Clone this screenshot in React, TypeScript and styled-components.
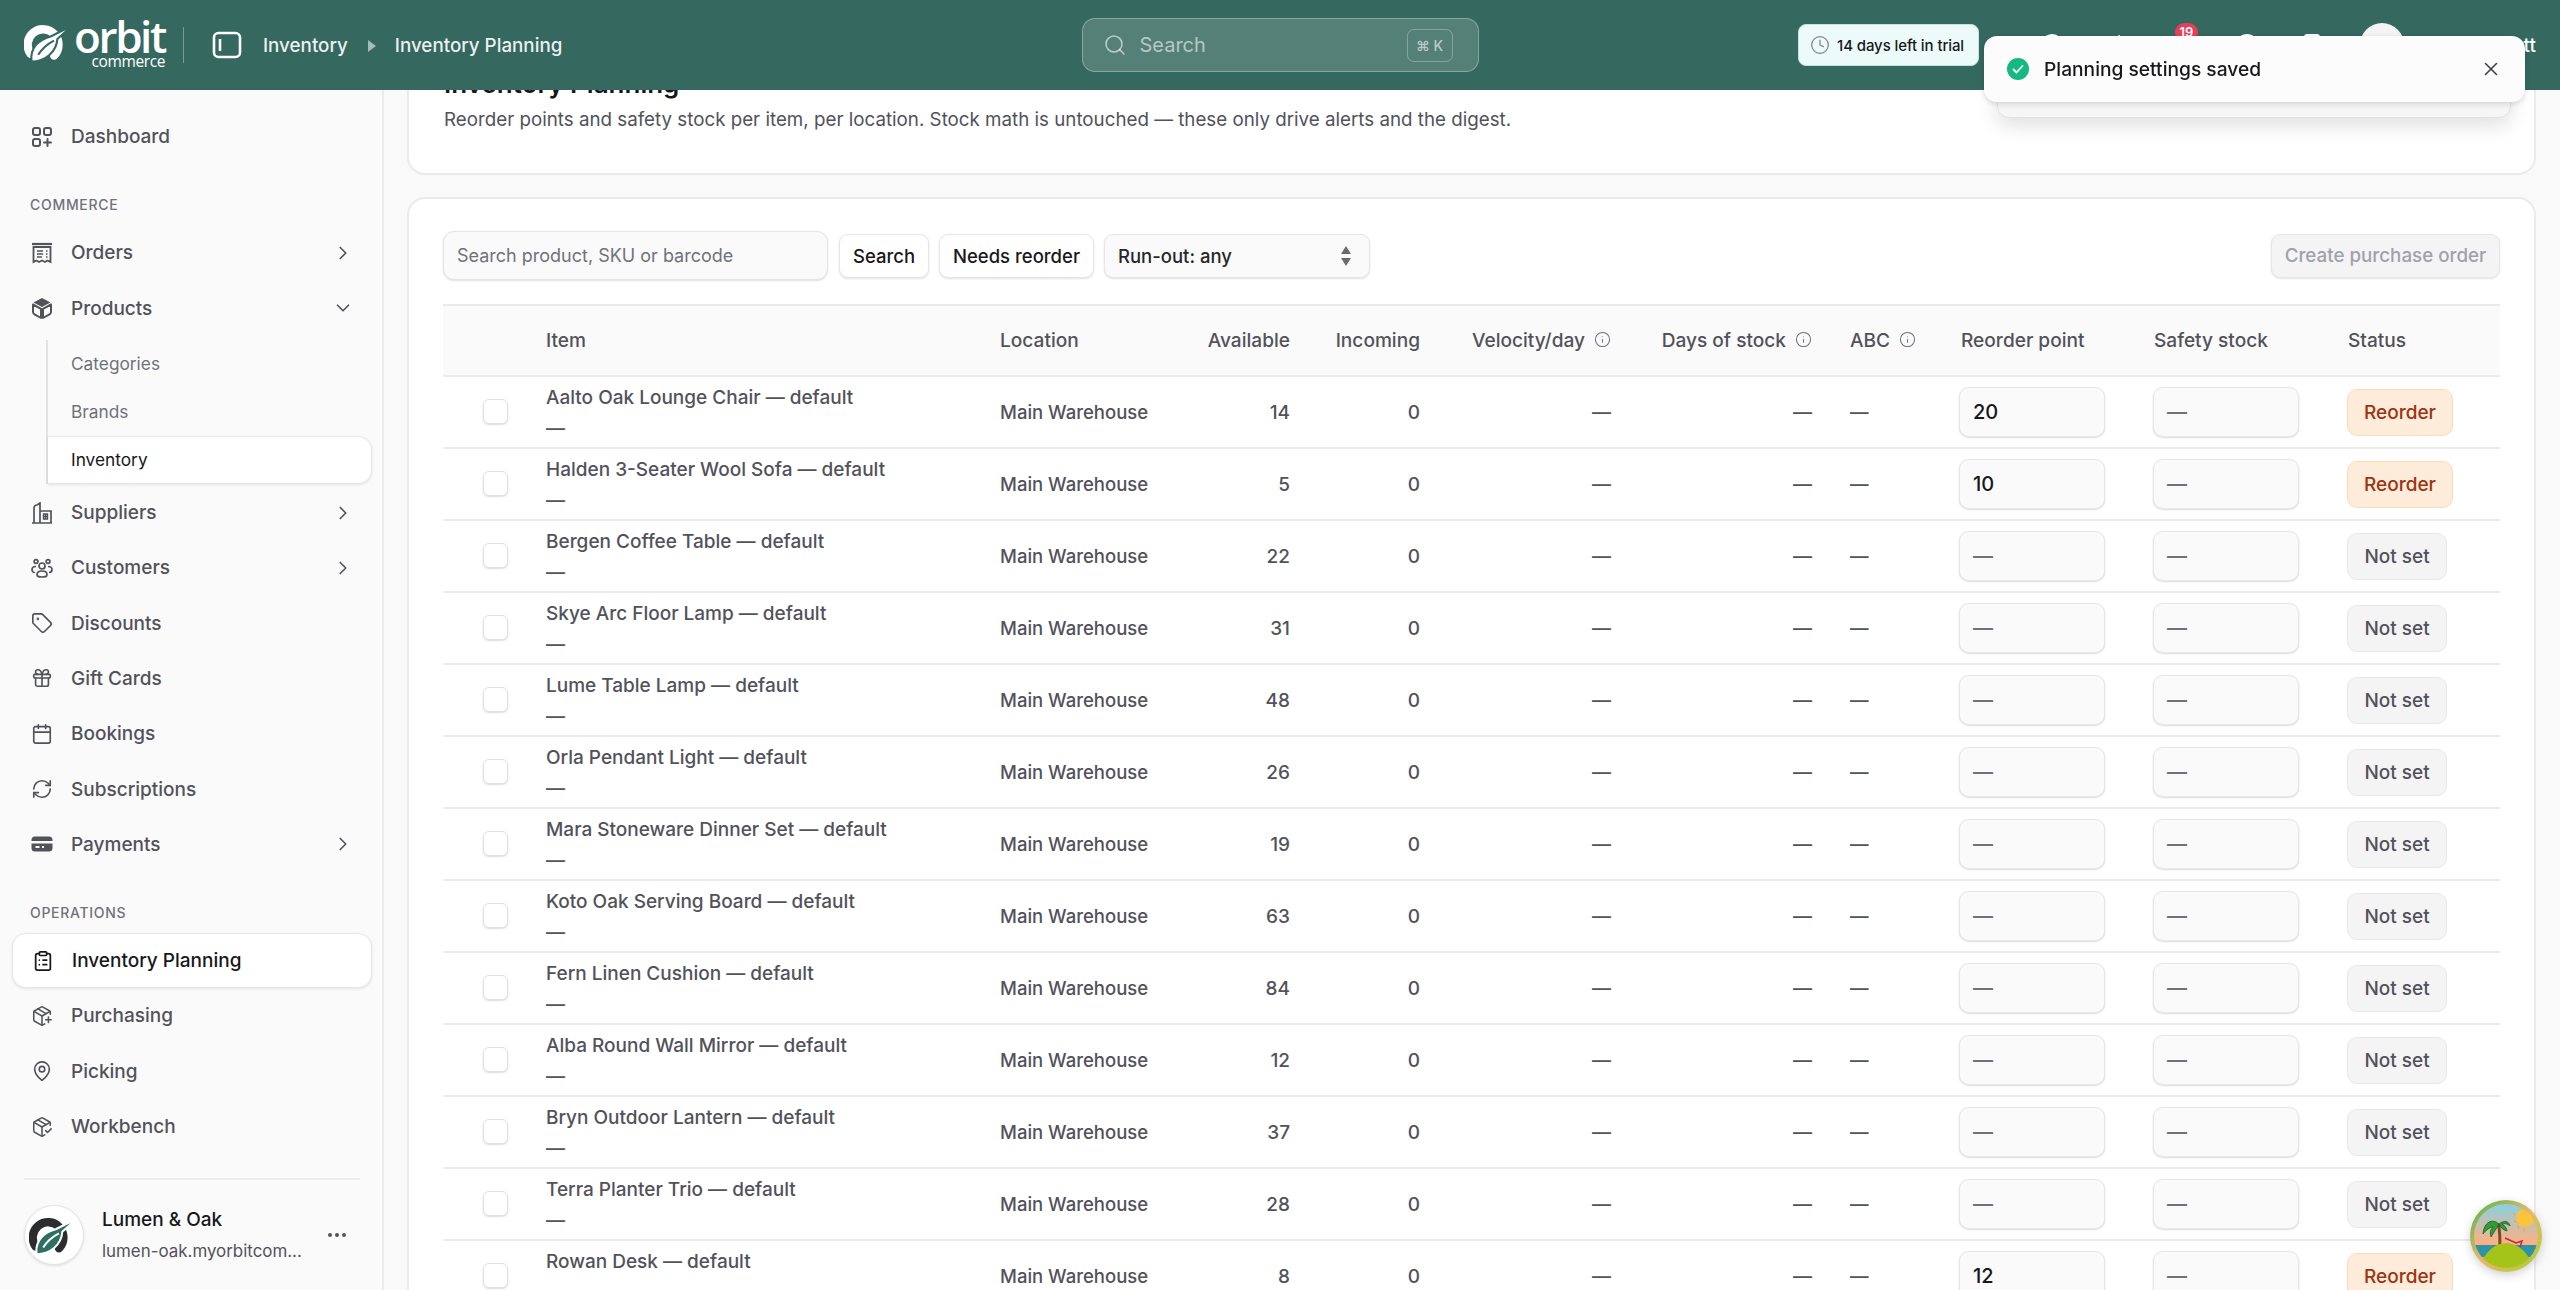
import React from 'react';
import styled, { createGlobalStyle } from 'styled-components';
import {
  Search as SearchIcon, Clock, X, Info, ChevronRight, ChevronDown, Tag, Gift, Calendar, RefreshCw, ClipboardList,
  PackagePlus, PackageCheck, MapPin, MessageCircle, SlidersHorizontal, Bell, CircleHelp, Store, MoreHorizontal,
} from 'lucide-react';

const Global = createGlobalStyle`
  html, body { margin: 0; padding: 0; height: 100%; overflow: hidden; background: #f9f9f9; }
  body { font-family: Inter, "Liberation Sans", sans-serif; color: #18181b; }
  * { box-sizing: border-box; }
`;

const Shell = styled.div`display: flex; flex-direction: column; height: 1290px; overflow: hidden;`;
const TopBar = styled.header`
  height: 90px; flex: none; background: #35685f; display: grid; grid-template-columns: 1fr 397px 1fr;
  align-items: center; padding: 0 24px; position: relative; z-index: 5;
`;
const TopLeft = styled.div`display: flex; align-items: center; color: rgba(255,255,255,.92); font-size: 18.8px; font-weight: 500;`;
const LogoWrap = styled.div`display: flex; align-items: flex-start; width: 141px; height: 46px; justify-content: space-between;`;
const LogoWords = styled.div`display: flex; flex-direction: column; align-items: flex-end; color: #fff; font-family: "Open Sans", sans-serif; line-height: 1;`;
const LogoName = styled.span`font-size: 44px; font-weight: 600; letter-spacing: -2.4px; height: 33px; line-height: 29px;`;
const LogoSub = styled.span`font-size: 15.5px; font-weight: 500; letter-spacing: -.4px; line-height: 13px;`;
const VBar = styled.div`width: 1px; height: 36px; background: rgba(255,255,255,.35); margin: 0 28px 0 18px;`;
const PanelGlyph = styled.svg`width: 30px; height: 28px; margin-right: 21px; flex: none;`;
const Crumb = styled.span`white-space: nowrap;`;
const CrumbArrow = styled.span`
  width: 0; height: 0; border-left: 8px solid rgba(255,255,255,.55); border-top: 6px solid transparent;
  border-bottom: 6px solid transparent; margin: 2px 19px 0 20px;
`;
const TopSearch = styled.div`
  height: 54px; border-radius: 13px; border: 1.5px solid rgba(255,255,255,.3); background: rgba(255,255,255,.16);
  display: flex; align-items: center; padding: 0 25px 0 20px; gap: 13px; color: rgba(255,255,255,.58); font-size: 20px;
`;
const Kbd = styled.span`
  margin-left: auto; width: 46px; height: 33px; border-radius: 7px; border: 1.5px solid rgba(255,255,255,.28);
  display: flex; align-items: center; justify-content: center; font-size: 14px; font-weight: 500; color: rgba(255,255,255,.6);
`;
const TopRight = styled.div`display: flex; align-items: center; justify-content: flex-end; color: #fff;`;
const TrialPill = styled.div`
  height: 42px; width: 181px; background: #ecfafa; border: 1.5px solid #bfe6e2; border-radius: 8px; display: flex; align-items: center;
  gap: 7px; padding-left: 11px; font-size: 15px; font-weight: 500; letter-spacing: -.1px; color: #18181b; white-space: nowrap; margin-right: 61px;
`;
const IconRow = styled.div`display: flex; align-items: center; gap: 41px; margin-right: 36px;`;
const BellWrap = styled.div`position: relative; display: flex;`;
const RedBadge = styled.span`
  position: absolute; top: -10px; left: 5px; min-width: 23px; height: 19px; border-radius: 10px; background: #e83e5a;
  color: #fff; font-size: 13px; font-weight: 600; text-align: center; line-height: 19px;
`;
const Avatar = styled.div`width: 44px; height: 44px; border-radius: 50%; background: #f4f4f4; margin-right: 16px; flex: none;`;
const UserName = styled.span`font-size: 19px; font-weight: 500; white-space: nowrap; width: 116px; text-align: right;`;

const ToastArea = styled.div`position: fixed; left: 1984px; top: 36px; width: 541px; z-index: 20;`;
const ToastBack = styled.div`
  position: absolute; left: 13px; right: 14px; top: 20px; height: 62px; background: #f6f6f6; border-radius: 12px;
  border: 1px solid #e2e2e2; box-shadow: 0 8px 20px rgba(0,0,0,.12);
`;
const Toast = styled.div`
  position: relative; height: 66px; background: #fcfcfc; border-radius: 13px; box-shadow: 0 2px 6px rgba(0,0,0,.14);
  display: flex; align-items: center; padding: 0 23px 0 23px; gap: 15px; font-size: 19.2px; font-weight: 500; color: #18181b;
`;
const ToastX = styled.span`margin-left: auto; display: flex; color: #3f3f46;`;

const Body = styled.div`flex: 1; display: flex; min-height: 0;`;
const Sidebar = styled.aside`
  width: 384px; flex: none; background: #fafafa; border-right: 2px solid #ececec; padding: 19px 10px 0 12px; display: flex; flex-direction: column;
`;
const NavItem = styled.div<{ $active?: boolean }>`
  display: flex; align-items: center; height: 55.3px; padding: 0 18px 0 19px;
  gap: 18px; font-size: 19px; font-weight: 500; color: ${p => (p.$active ? '#18181b' : '#52525b')};
  border-radius: 14px; flex: none;
  ${p => p.$active && 'background:#fff;border:1px solid #e8e8e8;box-shadow:0 1px 3px rgba(0,0,0,.1);'}
  svg.lead { width: 22px; height: 22px; flex: none; }
  svg.chev { margin-left: auto; color: #52525b; flex: none; }
`;
const SectionLabel = styled.div`
  font-size: 14px; font-weight: 500; letter-spacing: .7px; color: #71717a; line-height: 20px; padding-left: 18px;
  margin-top: 31px; margin-bottom: 10px; flex: none;
`;
const SubList = styled.div`margin: 4px 0 1px 34px; border-left: 2px solid #e2e2e2; display: flex; flex-direction: column; flex: none;`;
const SubItem = styled.div<{ $active?: boolean }>`
  height: 48px; display: flex; align-items: center; padding-left: 23px; font-size: 17.3px; color: ${p => (p.$active ? '#18181b' : '#71717a')};
  ${p => p.$active && 'background:#fff;border:1px solid #e8e8e8;border-left:0;border-radius:0 14px 14px 0;box-shadow:0 1px 3px rgba(0,0,0,.1);'}
`;
const Divider = styled.div`height: 2px; background: #ececec; margin: 24px 12px 25px; flex: none;`;
const StoreRow = styled.div`display: flex; align-items: center; padding: 0 12px; flex: none;`;
const StoreLogo = styled.div`
  width: 60px; height: 60px; border-radius: 50%; background: #fff; border: 1px solid #e5e5e5; box-shadow: 0 1px 3px rgba(0,0,0,.12);
  display: flex; align-items: center; justify-content: center; flex: none; margin-right: 18px;
`;
const StoreText = styled.div`display: flex; flex-direction: column; gap: 9px; width: 205px;`;
const StoreName = styled.span`font-size: 19px; font-weight: 500; line-height: 22px; color: #18181b;`;
const StoreUrl = styled.span`font-size: 16.9px; color: #52525b; line-height: 22px; white-space: nowrap;`;
const StoreMore = styled.span`display: flex; color: #52525b; margin-left: 18px;`;

const Main = styled.main`flex: 1; min-width: 0; padding: 0 24px 0 23px; overflow: hidden;`;
const TitleCard = styled.section`
  margin-top: -48px; background: #fff; border: 2px solid #ebebeb; border-radius: 18px; padding: 22px 34px 34px 35px; height: 133px;
`;
const PageTitle = styled.h1`margin: 0; font-size: 26px; font-weight: 600; line-height: 36px; color: #18181b;`;
const PageSub = styled.p`margin: 0; font-size: 18.75px; line-height: 36px; color: #52525b;`;
const TableCard = styled.section`
  margin-top: 22px; background: #fff; border: 2px solid #ebebeb; border-radius: 18px 18px 0 0; padding: 32px 34px 0 34px;
`;
const Toolbar = styled.div`display: flex; align-items: center; gap: 10px; margin-bottom: 24px; height: 49px;`;
const ToolInput = styled.div`
  width: 385px; height: 49px; margin-right: 1px; border: 1px solid #e4e4e4; border-radius: 11px; background: #fafafa; box-shadow: 0 1px 2px rgba(0,0,0,.12);
  display: flex; align-items: center; padding-left: 13px; font-size: 18px; color: #71717a;
`;
const ToolButton = styled.div<{ $w: number }>`
  width: ${p => p.$w}px; height: 44px; border: 1px solid #e6e6e6; border-radius: 9px; background: #fff; box-shadow: 0 1px 2px rgba(0,0,0,.12);
  display: flex; align-items: center; justify-content: center; font-size: 18.5px; font-weight: 500; color: #18181b; white-space: nowrap;
`;
const SelectBox = styled.div`
  width: 266px; height: 44px; border: 1px solid #e6e6e6; border-radius: 9px; background: #fafafa; box-shadow: 0 1px 2px rgba(0,0,0,.12);
  display: flex; align-items: center; justify-content: space-between; padding: 0 17px 0 13px; font-size: 18.5px; font-weight: 500; color: #27272a;
`;
const DisabledButton = styled.div`
  margin-left: auto; width: 229px; height: 44px; border: 1px solid #e6e6e6; border-radius: 9px; background: #f4f4f5; box-shadow: 0 1px 2px rgba(0,0,0,.1);
  display: flex; align-items: center; justify-content: center; font-size: 18.8px; font-weight: 500; color: #a1a1aa; white-space: nowrap;
`;
const GRID = '103px 454px 180px 110px 130px 191px 201px 147px 194px 194px 153px';
const HeadRow = styled.div`
  display: grid; grid-template-columns: ${GRID}; height: 73px; align-items: center; background: #fafafa; padding-bottom: 2px;
  border-top: 2px solid #ebebeb; border-bottom: 2px solid #ebebeb; font-size: 19.1px; font-weight: 500; color: #52525b;
`;
const Row = styled.div`
  display: grid; grid-template-columns: ${GRID}; height: 72px; align-items: center; border-bottom: 2px solid #ebebeb;
  font-size: 19px; color: #52525b; font-weight: 450;
`;
const HeadCell = styled.div<{ $right?: boolean; $pad?: number }>`
  display: flex; align-items: center; gap: 9px; justify-content: ${p => (p.$right ? 'flex-end' : 'flex-start')};
  padding-left: ${p => p.$pad || 0}px; white-space: nowrap;
  svg { color: #71717a; flex: none; }
`;
const CheckCell = styled.div`display: flex; justify-content: flex-end; padding-right: 38px; margin-top: -2px;`;
const CheckBox = styled.div`width: 25px; height: 25px; border: 1px solid #e2e2e2; border-radius: 6px; background: #fff; box-shadow: 0 1px 2px rgba(0,0,0,.14);`;
const ItemCell = styled.div`display: flex; flex-direction: column; margin-top: 2px;`;
const ItemName = styled.span`line-height: 31px; white-space: nowrap;`;
const ItemSub = styled.span`line-height: 31px;`;
const NumCell = styled.div`text-align: right; font-weight: 500;`;
const TextCell = styled.div<{ $pad?: number }>`padding-left: ${p => p.$pad || 0}px; font-size: 18.5px;`;
const FieldCell = styled.div`display: flex;`;
const Field = styled.div<{ $set?: boolean }>`
  width: 146px; height: 50px; border: 1px solid #e6e6e6; border-radius: 10px; background: #fafafa; box-shadow: 0 1px 2px rgba(0,0,0,.14);
  display: flex; align-items: center; padding-left: 13px; font-size: 20px; color: ${p => (p.$set ? '#18181b' : '#71717a')};
`;
const Badge = styled.div<{ $warn?: boolean }>`
  display: inline-flex; align-items: center; justify-content: center; height: 47px; width: ${p => (p.$warn ? '106px' : '100px')};
  border-radius: 10px; font-size: 19px; font-weight: 500;
  background: ${p => (p.$warn ? '#fdecd9' : '#f4f4f5')}; border: 1px solid ${p => (p.$warn ? '#fbdcb6' : '#e8e8e8')}; color: ${p => (p.$warn ? '#9a3412' : '#52525b')};
`;
const Widget = styled.svg`position: fixed; left: 2470px; top: 1200px; width: 72px; height: 72px; z-index: 10; filter: drop-shadow(0 3px 5px rgba(0,0,0,.18));`;

const rows: [string, number, string?][] = [
  ['Aalto Oak Lounge Chair', 14, '20'], ['Halden 3-Seater Wool Sofa', 5, '10'], ['Bergen Coffee Table', 22], ['Skye Arc Floor Lamp', 31],
  ['Lume Table Lamp', 48], ['Orla Pendant Light', 26], ['Mara Stoneware Dinner Set', 19], ['Koto Oak Serving Board', 63],
  ['Fern Linen Cushion', 84], ['Alba Round Wall Mirror', 12], ['Bryn Outdoor Lantern', 37], ['Terra Planter Trio', 28], ['Rowan Desk', 8, '12'],
];

const Mark = ({ ring, leaf, cut, size }: { ring: string; leaf: string; cut: string; size: number }) => (
  <svg width={size} height={size * 0.78} viewBox="0 0 60 47" fill="none">
    <path d="M8 37 A18.5 18.5 0 1 1 36 39" stroke={ring} strokeWidth="10" strokeLinecap="round" />
    <path d="M9 46 C7 30 17 20 32 16 L58 3 L40 19 C39 35 25 46 9 46Z" fill={leaf} stroke={cut} strokeWidth="2.5" />
    <path d="M17 38 C22 30 28 25 36 21" stroke={cut} strokeWidth="2.5" />
  </svg>
);

const DashIcon = () => (
  <svg className="lead" viewBox="0 0 22 22" fill="none" stroke="currentColor" strokeWidth="2">
    <rect x="2" y="2" width="7" height="7" rx="2" /><rect x="13" y="2" width="7" height="7" rx="2" /><rect x="2" y="13" width="7" height="7" rx="2" />
    <path d="M16.5 13v7M13 16.5h7" strokeLinecap="round" />
  </svg>
);
const OrdersIcon = () => (
  <svg className="lead" viewBox="0 0 22 22" fill="none" stroke="currentColor" strokeWidth="1.8">
    <path d="M1 2h20" strokeWidth="2.2" /><path d="M2.5 5v15l3-1.5 2.5 1.5 3-1.5 3 1.5 2.5-1.5 3 1.5V5z" />
    <path d="M6 9h6M6 12h6M6 15h5M15 9h1.5M15 12h1.5M15 15h1.5" strokeWidth="1.6" />
  </svg>
);
const CubeIcon = () => (
  <svg className="lead" viewBox="0 0 22 22">
    <path d="M11 1l8.5 4.5L11 10 2.5 5.5z" fill="currentColor" />
    <path d="M2 7.5l8 4.3V21l-6.5-3.6A3 3 0 0 1 2 15z M20 7.5l-8 4.3V21l6.5-3.6A3 3 0 0 0 20 15z" fill="none" stroke="currentColor" strokeWidth="2" strokeLinejoin="round" />
  </svg>
);
const SupplierIcon = () => (
  <svg className="lead" viewBox="0 0 22 22" fill="none" stroke="currentColor" strokeWidth="1.7">
    <path d="M1 21h20M3 21V6a3 3 0 0 1 3-3l3-2v20M9 9h11v12" /><path d="M12.5 12h4v5h-4zM14.5 12v5M12.5 14.5h4" strokeWidth="1.4" />
  </svg>
);
const UsersIcon = () => (
  <svg className="lead" viewBox="0 0 22 22" fill="none" stroke="currentColor" strokeWidth="1.7">
    <circle cx="11" cy="9" r="3" /><circle cx="5" cy="4.5" r="1.9" /><circle cx="17" cy="4.5" r="1.9" />
    <path d="M6 17.5c0-2.5 2-3.5 5-3.5s5 1 5 3.5-2 2.5-5 2.5-5 0-5-2.5zM4 15.5c-2 0-3-1-3-3s1.500-3 4-3M18 15.5c2 0 3-1 3-3s-1.500-3-4-3" />
  </svg>
);
const CardIcon = () => (
  <svg className="lead" viewBox="0 0 22 22">
    <path d="M4 3.500h14a3.500 3.500 0 0 1 3.500 3.500v1H.5V7A3.500 3.500 0 0 1 4 3.500zM.5 10.500h21V15a3.500 3.500 0 0 1-3.500 3.500H4A3.500 3.500 0 0 1 .5 15z" fill="currentColor" />
    <path d="M4.500 14h4M11 14h2" stroke="#fafafa" strokeWidth="1.800" />
  </svg>
);
const Chev = () => <ChevronRight className="chev" size={22} strokeWidth={1.8} />;

const Info16 = () => <Info size={17} strokeWidth={1.5} />;

export default function App() {
  return (
    <Shell>
      <Global />
      <TopBar>
        <TopLeft>
          <LogoWrap>
            <Mark ring="#fff" leaf="#fff" cut="#35685f" size={53} />
            <LogoWords>
              <LogoName>orbit</LogoName>
              <LogoSub>commerce</LogoSub>
            </LogoWords>
          </LogoWrap>
          <VBar />
          <PanelGlyph viewBox="0 0 30 28" fill="none" stroke="#fff" strokeWidth="2.6">
            <rect x="2" y="2" width="26" height="24" rx="4.500" /><path d="M8 8v12" />
          </PanelGlyph>
          <Crumb>Inventory</Crumb>
          <CrumbArrow />
          <Crumb>Inventory Planning</Crumb>
        </TopLeft>
        <TopSearch>
          <SearchIcon size={24} strokeWidth={1.6} />
          Search
          <Kbd>⌘ K</Kbd>
        </TopSearch>
        <TopRight>
          <TrialPill><Clock size={20} strokeWidth={1.5} color="#85858c" />14 days left in trial</TrialPill>
          <IconRow>
            <MessageCircle size={24} />
            <SlidersHorizontal size={24} />
            <BellWrap><Bell size={24} /><RedBadge>19</RedBadge></BellWrap>
            <CircleHelp size={24} />
            <Store size={24} />
          </IconRow>
          <Avatar />
          <UserName>Jane Scott</UserName>
        </TopRight>
      </TopBar>
      <ToastArea>
        <ToastBack />
        <Toast>
          <svg width="22" height="22" viewBox="0 0 22 22"><circle cx="11" cy="11" r="11" fill="#16b981" /><path d="M6.500 11.500l3 3 6-6.500" fill="none" stroke="#fff" strokeWidth="1.800" strokeLinecap="round" strokeLinejoin="round" /></svg>
          Planning settings saved
          <ToastX><X size={22} strokeWidth={1.7} /></ToastX>
        </Toast>
      </ToastArea>
      <Body>
        <Sidebar>
          <NavItem><DashIcon />Dashboard</NavItem>
          <SectionLabel>COMMERCE</SectionLabel>
          <NavItem><OrdersIcon />Orders<Chev /></NavItem>
          <NavItem><CubeIcon />Products<ChevronDown className="chev" size={22} strokeWidth={1.8} /></NavItem>
          <SubList>
            <SubItem>Categories</SubItem>
            <SubItem>Brands</SubItem>
            <SubItem $active>Inventory</SubItem>
          </SubList>
          <NavItem><SupplierIcon />Suppliers<Chev /></NavItem>
          <NavItem><UsersIcon />Customers<Chev /></NavItem>
          <NavItem><Tag className="lead" strokeWidth={1.8} />Discounts</NavItem>
          <NavItem><Gift className="lead" strokeWidth={1.8} />Gift Cards</NavItem>
          <NavItem><Calendar className="lead" strokeWidth={1.8} />Bookings</NavItem>
          <NavItem><RefreshCw className="lead" strokeWidth={1.8} />Subscriptions</NavItem>
          <NavItem><CardIcon />Payments<Chev /></NavItem>
          <SectionLabel>OPERATIONS</SectionLabel>
          <NavItem $active><ClipboardList className="lead" strokeWidth={1.9} />Inventory Planning</NavItem>
          <NavItem><PackagePlus className="lead" strokeWidth={1.7} />Purchasing</NavItem>
          <NavItem><MapPin className="lead" strokeWidth={1.8} />Picking</NavItem>
          <NavItem><PackageCheck className="lead" strokeWidth={1.7} />Workbench</NavItem>
          <Divider />
          <StoreRow>
            <StoreLogo><Mark ring="#2b2d31" leaf="#2f6f62" cut="#fff" size={50} /></StoreLogo>
            <StoreText>
              <StoreName>Lumen &amp; Oak</StoreName>
              <StoreUrl>lumen-oak.myorbitcom...</StoreUrl>
            </StoreText>
            <StoreMore><MoreHorizontal size={24} strokeWidth={2} /></StoreMore>
          </StoreRow>
        </Sidebar>
        <Main>
          <TitleCard>
            <PageTitle>Inventory Planning</PageTitle>
            <PageSub>Reorder points and safety stock per item, per location. Stock math is untouched — these only drive alerts and the digest.</PageSub>
          </TitleCard>
          <TableCard>
            <Toolbar>
              <ToolInput>Search product, SKU or barcode</ToolInput>
              <ToolButton $w={90}>Search</ToolButton>
              <ToolButton $w={155}>Needs reorder</ToolButton>
              <SelectBox>
                Run-out: any
                <svg width="12" height="24" viewBox="0 0 12 24" fill="#6b6b72"><path d="M6 2l5 8H1zM6 22l-5-8h10z" /></svg>
              </SelectBox>
              <DisabledButton>Create purchase order</DisabledButton>
            </Toolbar>
            <HeadRow>
              <HeadCell />
              <HeadCell>Item</HeadCell>
              <HeadCell>Location</HeadCell>
              <HeadCell $right>Available</HeadCell>
              <HeadCell $right>Incoming</HeadCell>
              <HeadCell $right>Velocity/day<Info16 /></HeadCell>
              <HeadCell $right>Days of stock<Info16 /></HeadCell>
              <HeadCell $pad={38}>ABC<Info16 /></HeadCell>
              <HeadCell $pad={2}>Reorder point</HeadCell>
              <HeadCell $pad={1}>Safety stock</HeadCell>
              <HeadCell $pad={1}>Status</HeadCell>
            </HeadRow>
            {rows.map(([name, avail, point]) => (
              <Row key={name}>
                <CheckCell><CheckBox /></CheckCell>
                <ItemCell>
                  <ItemName>{name} — default</ItemName>
                  <ItemSub>—</ItemSub>
                </ItemCell>
                <TextCell>Main Warehouse</TextCell>
                <NumCell>{avail}</NumCell>
                <NumCell>0</NumCell>
                <NumCell>—</NumCell>
                <NumCell>—</NumCell>
                <TextCell $pad={38}>—</TextCell>
                <FieldCell><Field $set={!!point}>{point || '—'}</Field></FieldCell>
                <FieldCell><Field>—</Field></FieldCell>
                <FieldCell><Badge $warn={!!point}>{point ? 'Reorder' : 'Not set'}</Badge></FieldCell>
              </Row>
            ))}
          </TableCard>
        </Main>
      </Body>
      <Widget viewBox="0 0 72 72">
        <defs>
          <linearGradient id="ring" x1="0" y1="0" x2="1" y2="1"><stop offset="0" stopColor="#4cb84a" /><stop offset=".5" stopColor="#e9b66a" /><stop offset="1" stopColor="#a6d32b" /></linearGradient>
          <linearGradient id="sky" x1="0" y1="0" x2="0" y2="1"><stop offset="0" stopColor="#7fd3ea" /><stop offset=".6" stopColor="#fdb083" /><stop offset="1" stopColor="#f9936f" /></linearGradient>
          <clipPath id="inner"><circle cx="36" cy="36" r="32" /></clipPath>
        </defs>
        <circle cx="36" cy="36" r="36" fill="url(#ring)" />
        <g clipPath="url(#inner)">
          <rect width="72" height="72" fill="url(#sky)" />
          <circle cx="55" cy="18" r="9" fill="#fcc43a" />
          <path d="M43 12l2 3M44 21l3 1M48 26l1 3M54 28v3" stroke="#e9a436" strokeWidth="1" />
          <rect x="4" y="45" width="64" height="12" fill="#2d94a8" />
          <path d="M27 24c1 7 2 14 1 25h3c1-10 0-18-1-25z" fill="#7a4a22" />
          <path d="M29 24c-7-6-15-2-16 10 3-4 7-7 10-7-3 3-3 6-2 10 3-5 5-8 8-13 2 4 4 6 8 7 0-3-3-6-5-7 3-1 6 0 8 2-1-5-6-6-11-2z" fill="#2f9e3a" stroke="#155d22" strokeWidth=".8" />
          <path d="M35 38l11 5 6-2-2 6" fill="none" stroke="#c2264b" strokeWidth="1.500" />
          <path d="M8 70C14 52 25 43 36 43s24 10 28 27z" fill="#a5c41a" />
        </g>
      </Widget>
    </Shell>
  );
}
